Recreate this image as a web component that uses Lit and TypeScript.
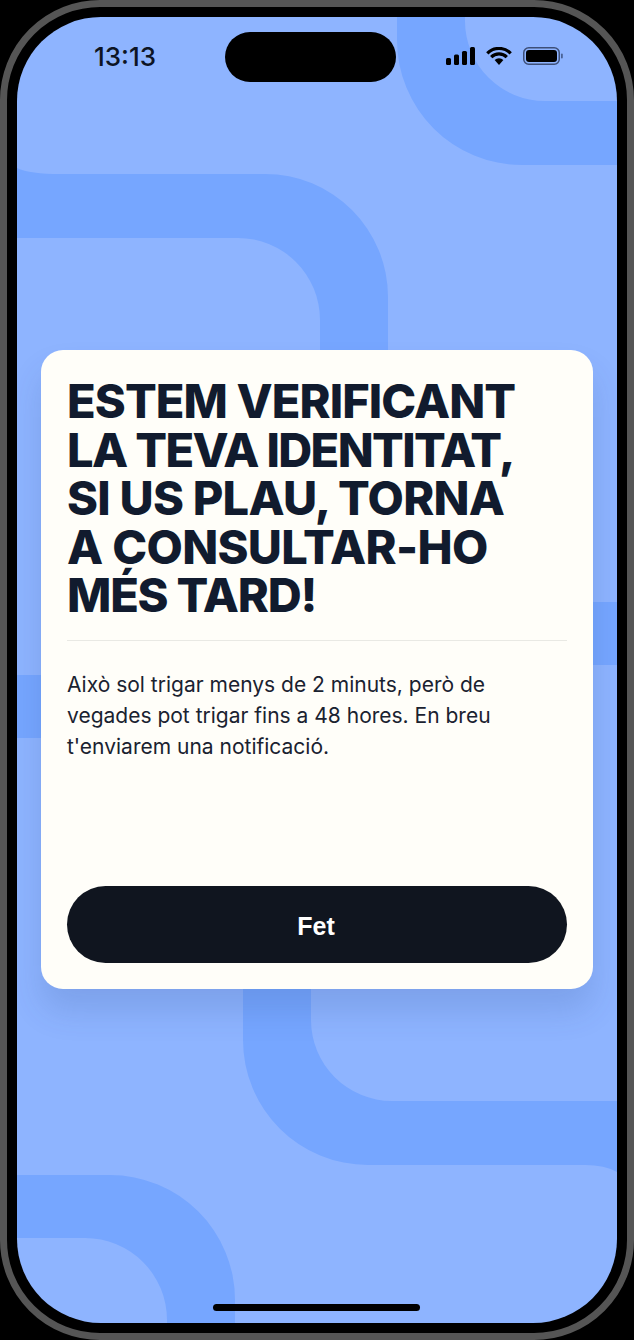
import { LitElement, html, css } from "lit";
import { customElement } from "lit/decorators.js";

// letter spacing is set per line, the reference face is a bit narrower than Inter
const TITLE_LINES = [
  { text: "ESTEM VERIFICANT", spacing: -0.9 },
  { text: "LA TEVA IDENTITAT,", spacing: -1.6 },
  { text: "SI US PLAU, TORNA", spacing: -0.75 },
  { text: "A CONSULTAR-HO", spacing: -0.65 },
  { text: "MÉS TARD!", spacing: -1.2 },
];

@customElement("app-root")
export class AppRoot extends LitElement {
  static styles = css`
    :host {
      display: block;
      width: 634px;
      height: 1340px;
      background: #000;
    }
    .frame {
      box-sizing: border-box;
      width: 634px;
      height: 1340px;
      padding: 10px;
      border: 7px solid #555;
      border-radius: 100px;
      background: #000;
    }
    .screen {
      position: relative;
      height: 1306px;
      border-radius: 84px;
      overflow: hidden;
      background: #8eb4ff;
      display: flex;
      flex-direction: column;
      font-family: "Inter", "Liberation Sans", sans-serif;
      color: #111827;
    }
    .bands {
      position: absolute;
      inset: 0;
      width: 600px;
      height: 1306px;
    }
    .bands path {
      fill: #76a6ff;
    }
    .status {
      position: relative;
      box-sizing: border-box;
      height: 60px;
      padding: 26px 53px 0 77px;
      display: flex;
      justify-content: space-between;
      align-items: flex-start;
    }
    .time {
      font-size: 26px;
      font-weight: 500;
      line-height: 28px;
      color: #0d1424;
    }
    .status-icons {
      display: flex;
      align-items: flex-start;
      gap: 11px;
      padding-top: 4px;
    }
    .status-icons svg {
      display: block;
    }
    .island {
      position: absolute;
      left: 208px;
      top: 15px;
      width: 171px;
      height: 50px;
      border-radius: 25px;
      background: #000;
    }
    .card {
      position: relative;
      box-sizing: border-box;
      height: 639px;
      margin: 273px 24px 0;
      padding: 27px 26px 26px;
      border-radius: 22px;
      background: #fffef9;
      box-shadow: 0 22px 32px rgba(40, 70, 130, 0.16);
      display: flex;
      flex-direction: column;
    }
    h1 {
      margin: 0;
      font-size: 47px;
      font-weight: 800;
      line-height: 48.5px;
      color: #111b2e;
      white-space: nowrap;
    }
    h1 span {
      display: block;
    }
    .rule {
      height: 1px;
      margin: 20px 0 28px;
      background: #e9e9e4;
    }
    p {
      margin: 0;
      font-size: 21px;
      line-height: 31px;
      color: #1a2230;
      white-space: nowrap;
    }
    button {
      margin-top: auto;
      height: 77px;
      padding: 4px 2px 0 0;
      border: 0;
      border-radius: 39px;
      background: #10151f;
      color: #fff;
      font-family: "Liberation Sans", Arial, sans-serif;
      font-size: 25px;
      font-weight: 700;
    }
    .home {
      position: absolute;
      left: 196px;
      bottom: 12px;
      width: 207px;
      height: 7px;
      border-radius: 4px;
      background: #000;
    }
  `;

  render() {
    return html`
      <div class="frame">
        <div class="screen">
          <svg class="bands" viewBox="17 17 600 1306">
            <path d="M397 0V40A125 125 0 0 0 522 165H640V101H545A80 80 0 0 1 465 21V0Z" />
            <path d="M17 168Q30 174 60 174H265A123 123 0 0 1 388 297V360H320V320A82 82 0 0 0 238 238H17Z" />
            <path d="M17 675H60V738H17Z" />
            <path d="M570 602H617V665H570Z" />
            <path d="M243 980V1040A125 125 0 0 0 368 1165H585Q605 1165 617 1172V1101H392A81 81 0 0 1 311 1020V980Z" />
            <path d="M17 1175H110A125 125 0 0 1 235 1300V1323H167V1320A82 82 0 0 0 85 1238H17Z" />
          </svg>

          <div class="status">
            <span class="time">13:13</span>
            <div class="status-icons">
              <svg width="29" height="18" viewBox="0 0 29 18" fill="#000">
                <rect x="0" y="11" width="5" height="7" rx="1.5" />
                <rect x="8" y="7.5" width="5" height="10.5" rx="1.5" />
                <rect x="16" y="4" width="5" height="14" rx="1.5" />
                <rect x="24" y="0" width="5" height="18" rx="1.5" />
              </svg>
              <svg width="26" height="18" viewBox="0 0 26 18">
                <path d="M13 18L8.6 13A6.6 6.6 0 0 1 17.4 13Z" fill="#000" />
                <path
                  d="M5.2 10.2A11 11 0 0 1 20.8 10.2M1.3 6.3A16.5 16.5 0 0 1 24.7 6.3"
                  fill="none"
                  stroke="#000"
                  stroke-width="3.2"
                />
              </svg>
              <svg width="41" height="18" viewBox="0 0 41 18">
                <rect x="0.75" y="0.75" width="35.5" height="16.5" rx="5" fill="none" stroke="#3d4f78" stroke-width="1.5" />
                <rect x="3" y="3" width="31" height="12" rx="3" fill="#000" />
                <rect x="38" y="6.5" width="1.8" height="5" rx="0.9" fill="#4a6296" />
              </svg>
            </div>
          </div>
          <div class="island"></div>

          <div class="card">
            <h1>
              ${TITLE_LINES.map(
                (line) => html`<span style="letter-spacing: ${line.spacing}px">${line.text}</span>`
              )}
            </h1>
            <div class="rule"></div>
            <p>Això sol trigar menys de 2 minuts, però de<br />vegades pot trigar fins a 48 hores. En breu<br />t'enviarem una notificació.</p>
            <button>Fet</button>
          </div>

          <div class="home"></div>
        </div>
      </div>
    `;
  }
}
